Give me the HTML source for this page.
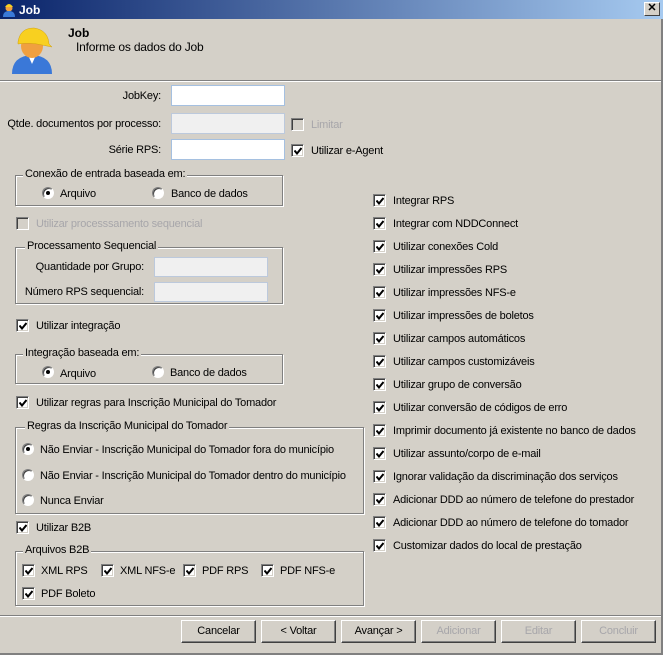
<!DOCTYPE html>
<html><head><meta charset="utf-8"><style>
*{margin:0;padding:0;box-sizing:border-box}
body{width:663px;height:655px;background:#d4d0c8;font-family:"Liberation Sans",sans-serif;font-size:11px;letter-spacing:-0.2px;color:#000;position:relative;overflow:hidden}
.a{position:absolute}
.t{position:absolute;line-height:14px;white-space:nowrap}
.r{text-align:right}
.dis{color:#a7a6aa}
.cb{position:absolute;width:13px;height:13px;background:#fff;border:1px solid;border-color:#808080 #fff #fff #808080;box-shadow:inset 1px 1px 0 #404040,inset -1px -1px 0 #d4d0c8}
.cb.on::after{content:"";position:absolute;left:2px;top:2px;width:8px;height:8px;background:no-repeat url("data:image/svg+xml;utf8,<svg xmlns='http://www.w3.org/2000/svg' width='8' height='8'><path d='M0.5 3.5 L3 6.5 L7.5 1' stroke='black' stroke-width='2' fill='none'/></svg>")}
.cb.d{background:#d4d0c8}
.rd{position:absolute;width:12px;height:12px;border-radius:50%;background:#fff;border:1px solid;border-color:#808080 #fff #fff #808080;box-shadow:inset 1px 1px 0 #404040}
.rd.on::after{content:"";position:absolute;left:3px;top:3px;width:4px;height:4px;border-radius:50%;background:#000}
.inp{position:absolute;height:21px;background:#fff;border:1px solid #a5c0e0}
.inp.g{background:#f0f0f0;border-color:#bcc9dc}
.gb{position:absolute;border:1px solid #808080;box-shadow:1px 1px 0 #fff,inset 1px 1px 0 #fff}
.gl{position:absolute;background:#d4d0c8;padding:0 2px;line-height:13px;white-space:nowrap}
.btn{position:absolute;top:620px;width:75px;height:23px;background:#d4d0c8;border:1px solid;border-color:#fff #404040 #404040 #fff;box-shadow:inset -1px -1px 0 #808080;text-align:center;line-height:21px}
</style></head><body>
<div class="a" style="left:0;top:0;width:663px;height:19px;background:linear-gradient(90deg,#0a246a,#a6caf0)"></div>
<svg class="a" style="left:2px;top:2px" width="15" height="15"><circle cx="7" cy="6" r="3.5" fill="#f0a040"/><path d="M3 5 Q7 -1 11 5Z" fill="#f8d020"/><path d="M1 15 Q1 9 7 9 Q13 9 13 15Z" fill="#3a7ad8"/></svg>
<div class="t" style="left:19px;top:3px;color:#fff;font-weight:bold;font-size:12px;letter-spacing:0">Job</div>
<div class="a" style="left:644px;top:2px;width:16px;height:14px;background:#d4d0c8;border:1px solid;border-color:#fff #404040 #404040 #fff;font-size:11px;line-height:11px;text-align:center;font-weight:bold;letter-spacing:0">✕</div>
<svg class="a" style="left:10px;top:24px" width="44" height="52">
<path d="M2 50 Q2 32 22 31 Q42 32 42 50Z" fill="#3a78d8"/>
<path d="M18 31 L22 40 L26 31Z" fill="#fff"/>
<ellipse cx="22" cy="22" rx="11" ry="12" fill="#f0a040"/>
<path d="M8 18 Q10 4 24 4 Q38 6 39 20 L42 23 L32 21 Q20 18 8 20Z" fill="#f8d020" stroke="#d0a010" stroke-width="0.5"/>
</svg>
<div class="t" style="left:68px;top:26px;font-weight:bold;font-size:12px;letter-spacing:0">Job</div>
<div class="t" style="left:76px;top:40px;font-size:12px;letter-spacing:-0.2px">Informe os dados do Job</div>
<div class="a" style="left:0;top:80px;width:663px;height:2px;border-top:1px solid #808080;border-bottom:1px solid #fff"></div>

<div class="t r" style="right:502px;top:89px">JobKey:</div>
<div class="inp" style="left:171px;top:85px;width:114px"></div>
<div class="t r" style="right:502px;top:117px">Qtde. documentos por processo:</div>
<div class="inp g" style="left:171px;top:113px;width:114px"></div>
<div class="cb d" style="left:291px;top:118px"></div><div class="t dis" style="left:311px;top:118px">Limitar</div>
<div class="t r" style="right:502px;top:143px">Série RPS:</div>
<div class="inp" style="left:171px;top:139px;width:114px"></div>
<div class="cb on" style="left:291px;top:144px"></div><div class="t" style="left:311px;top:144px">Utilizar e-Agent</div>

<div class="gb" style="left:15px;top:175px;width:268px;height:31px"></div><div class="gl" style="left:23px;top:168px">Conexão de entrada baseada em:</div>
<div class="rd on" style="left:42px;top:187px"></div><div class="t" style="left:60px;top:187px">Arquivo</div>
<div class="rd" style="left:152px;top:187px"></div><div class="t" style="left:171px;top:187px">Banco de dados</div>

<div class="cb d" style="left:16px;top:217px"></div><div class="t dis" style="left:36px;top:217px">Utilizar processsamento sequencial</div>

<div class="gb" style="left:15px;top:247px;width:268px;height:57px"></div><div class="gl" style="left:25px;top:240px">Processamento Sequencial</div>
<div class="t r" style="right:519px;top:260px">Quantidade por Grupo:</div>
<div class="inp g" style="left:154px;top:257px;width:114px;height:20px"></div>
<div class="t r" style="right:519px;top:285px">Número RPS sequencial:</div>
<div class="inp g" style="left:154px;top:282px;width:114px;height:20px"></div>

<div class="cb on" style="left:16px;top:319px"></div><div class="t" style="left:36px;top:319px">Utilizar integração</div>

<div class="gb" style="left:15px;top:354px;width:268px;height:30px"></div><div class="gl" style="left:23px;top:347px">Integração baseada em:</div>
<div class="rd on" style="left:42px;top:366px"></div><div class="t" style="left:60px;top:367px">Arquivo</div>
<div class="rd" style="left:152px;top:366px"></div><div class="t" style="left:170px;top:366px">Banco de dados</div>

<div class="cb on" style="left:16px;top:396px"></div><div class="t" style="left:36px;top:396px">Utilizar regras para Inscrição Municipal do Tomador</div>

<div class="gb" style="left:15px;top:427px;width:349px;height:87px"></div><div class="gl" style="left:25px;top:420px">Regras da Inscrição Municipal do Tomador</div>
<div class="rd on" style="left:22px;top:443px"></div><div class="t" style="left:40px;top:443px">Não Enviar - Inscrição Municipal do Tomador fora do município</div>
<div class="rd" style="left:22px;top:469px"></div><div class="t" style="left:40px;top:469px">Não Enviar - Inscrição Municipal do Tomador dentro do município</div>
<div class="rd" style="left:22px;top:494px"></div><div class="t" style="left:40px;top:494px">Nunca Enviar</div>

<div class="cb on" style="left:16px;top:521px"></div><div class="t" style="left:36px;top:521px">Utilizar B2B</div>

<div class="gb" style="left:15px;top:551px;width:349px;height:55px"></div><div class="gl" style="left:23px;top:544px">Arquivos B2B</div>
<div class="cb on" style="left:22px;top:564px"></div><div class="t" style="left:41px;top:564px">XML RPS</div>
<div class="cb on" style="left:101px;top:564px"></div><div class="t" style="left:120px;top:564px">XML NFS-e</div>
<div class="cb on" style="left:183px;top:564px"></div><div class="t" style="left:202px;top:564px">PDF RPS</div>
<div class="cb on" style="left:261px;top:564px"></div><div class="t" style="left:280px;top:564px">PDF NFS-e</div>
<div class="cb on" style="left:22px;top:587px"></div><div class="t" style="left:41px;top:587px">PDF Boleto</div>

<div class="cb on" style="left:373px;top:194px"></div><div class="t" style="left:393px;top:194px">Integrar RPS</div>
<div class="cb on" style="left:373px;top:217px"></div><div class="t" style="left:393px;top:217px">Integrar com NDDConnect</div>
<div class="cb on" style="left:373px;top:240px"></div><div class="t" style="left:393px;top:240px">Utilizar conexões Cold</div>
<div class="cb on" style="left:373px;top:263px"></div><div class="t" style="left:393px;top:263px">Utilizar impressões RPS</div>
<div class="cb on" style="left:373px;top:286px"></div><div class="t" style="left:393px;top:286px">Utilizar impressões NFS-e</div>
<div class="cb on" style="left:373px;top:309px"></div><div class="t" style="left:393px;top:309px">Utilizar impressões de boletos</div>
<div class="cb on" style="left:373px;top:332px"></div><div class="t" style="left:393px;top:332px">Utilizar campos automáticos</div>
<div class="cb on" style="left:373px;top:355px"></div><div class="t" style="left:393px;top:355px">Utilizar campos customizáveis</div>
<div class="cb on" style="left:373px;top:378px"></div><div class="t" style="left:393px;top:378px">Utilizar grupo de conversão</div>
<div class="cb on" style="left:373px;top:401px"></div><div class="t" style="left:393px;top:401px">Utilizar conversão de códigos de erro</div>
<div class="cb on" style="left:373px;top:424px"></div><div class="t" style="left:393px;top:424px">Imprimir documento já existente no banco de dados</div>
<div class="cb on" style="left:373px;top:447px"></div><div class="t" style="left:393px;top:447px">Utilizar assunto/corpo de e-mail</div>
<div class="cb on" style="left:373px;top:470px"></div><div class="t" style="left:393px;top:470px">Ignorar validação da discriminação dos serviços</div>
<div class="cb on" style="left:373px;top:493px"></div><div class="t" style="left:393px;top:493px">Adicionar DDD ao número de telefone do prestador</div>
<div class="cb on" style="left:373px;top:516px"></div><div class="t" style="left:393px;top:516px">Adicionar DDD ao número de telefone do tomador</div>
<div class="cb on" style="left:373px;top:539px"></div><div class="t" style="left:393px;top:539px">Customizar dados do local de prestação</div>

<div class="a" style="left:0;top:615px;width:663px;height:2px;border-top:1px solid #808080;border-bottom:1px solid #fff"></div>
<div class="btn" style="left:181px">Cancelar</div>
<div class="btn" style="left:261px">&lt; Voltar</div>
<div class="btn" style="left:341px">Avançar &gt;</div>
<div class="btn dis" style="left:421px">Adicionar</div>
<div class="btn dis" style="left:501px">Editar</div>
<div class="btn dis" style="left:581px">Concluir</div>
<div class="a" style="left:0;top:653px;width:663px;height:2px;background:#808080"></div>
<div class="a" style="left:661px;top:19px;width:2px;height:636px;background:#808080"></div>
</body></html>
